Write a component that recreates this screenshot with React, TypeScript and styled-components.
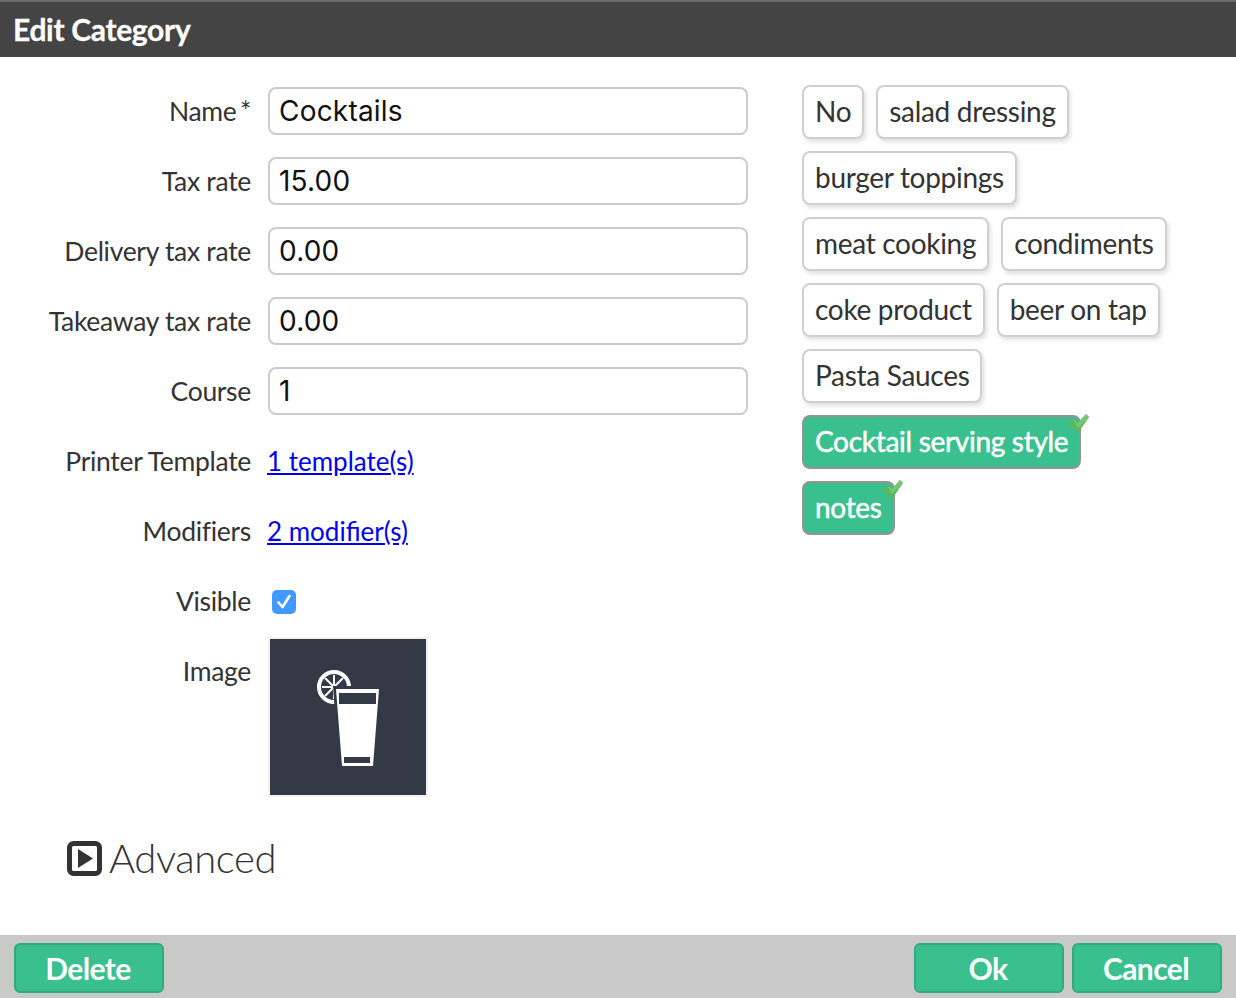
import React from 'react'
import styled, { createGlobalStyle } from 'styled-components'

const GlobalStyle = createGlobalStyle`
  html, body { margin: 0; padding: 0; background: #fff; }
  body { font-family: Lato, "Liberation Sans", sans-serif; color: #333; }
`

const Page = styled.div`
  width: 1236px;
  height: 998px;
  display: flex;
  flex-direction: column;
  overflow: hidden;
`

const Header = styled.header`
  flex: none;
  height: 57px;
  box-sizing: border-box;
  background: #444;
  border-top: 2px solid #6b6b6b;
  display: flex;
  align-items: center;
  padding-left: 13px;
  padding-bottom: 2px;
  color: #fff;
  font-size: 30px;
  font-weight: 700;
  letter-spacing: -0.32px;
  -webkit-text-stroke: 0.3px #fff;
`

const Body = styled.main`
  flex: 1;
  min-height: 0;
  display: flex;
`

const Form = styled.div`
  width: 802px;
  flex: none;
  display: flex;
  flex-direction: column;
  padding-top: 19px;
`

const Row = styled.div<{ $tall?: boolean }>`
  display: grid;
  grid-template-columns: 251px 480px;
  column-gap: 17px;
  height: ${p => (p.$tall ? '161px' : '70px')};
  align-items: ${p => (p.$tall ? 'start' : 'center')};
`

const Label = styled.label<{ $tall?: boolean; $tight?: boolean }>`
  text-align: right;
  font-size: 26.5px;
  letter-spacing: -0.3px;
  word-spacing: ${p => (p.$tight ? '-3px' : '0')};
  color: #333;
  line-height: 32px;
  margin-top: ${p => (p.$tall ? '19px' : '0')};
`

const Input = styled.input`
  width: 480px;
  height: 48px;
  box-sizing: border-box;
  border: 2px solid #ccc;
  border-radius: 8px;
  padding: 0 9px;
  font-family: Inter, sans-serif;
  font-size: 28px;
  letter-spacing: 0.2px;
  color: #111;
  background: #fff;
  outline: none;
`

const ValueLink = styled.a`
  color: #0000ee;
  font-size: 26px;
  margin-left: -1px;
  text-decoration: underline;
`

const CheckCell = styled.div`
  padding: 2px 0 0 4px;
  display: flex;
  align-items: center;
`

const ImageBox = styled.div`
  width: 160px;
  height: 160px;
  box-sizing: border-box;
  border: 2px solid #f2f2f2;
  background: #333a46;
  margin-top: 1px;
`

const Tags = styled.div`
  flex: 1;
  display: flex;
  flex-direction: column;
  gap: 12px;
  padding-top: 28px;
`

const TagRow = styled.div`
  display: flex;
  gap: 12px;
`

const Tag = styled.div<{ $on?: boolean }>`
  position: relative;
  height: 54px;
  box-sizing: border-box;
  padding: 0 11px 2px;
  display: flex;
  align-items: center;
  border-radius: 8px;
  border: 2px solid ${p => (p.$on ? '#949494' : '#d0d0d0')};
  background: ${p => (p.$on ? '#39c08e' : '#fff')};
  color: ${p => (p.$on ? '#fff' : '#333')};
  font-size: 28px;
  letter-spacing: -0.3px;
  -webkit-text-stroke: ${p => (p.$on ? '0.5px #fff' : '0')};
  box-shadow: ${p => (p.$on ? 'none' : '2px 3px 4px rgba(0, 0, 0, 0.12)')};
`

const Tick = styled.svg`
  position: absolute;
  top: -3px;
  right: -10px;
`

const Advanced = styled.div`
  display: flex;
  align-items: center;
  gap: 7px;
  margin: 37px 0 0 67px;
  font-size: 40px;
  font-weight: 300;
  letter-spacing: -0.4px;
  color: #333;
  line-height: 48px;
`

const Footer = styled.footer`
  flex: none;
  height: 63px;
  box-sizing: border-box;
  background: #c9c9c9;
  display: flex;
  align-items: flex-start;
  padding: 8px 14px 0;
  gap: 8px;
`

const Spacer = styled.div`
  flex: 1;
`

const Button = styled.button`
  width: 150px;
  height: 50px;
  box-sizing: border-box;
  border: 2px solid #31ab7e;
  border-radius: 6px;
  background: #39c08e;
  color: #fff;
  font-family: Lato, sans-serif;
  font-size: 30px;
  font-weight: 700;
  letter-spacing: -0.6px;
  padding: 0 2px 0 0;
`

const CheckBox = () => (
  <svg width="24" height="24" viewBox="0 0 24 24">
    <rect width="24" height="24" rx="5" fill="#4099ff" />
    <path d="M6.500 12.500l4 4.500 7-11" fill="none" stroke="#fff" strokeWidth="2.600" strokeLinecap="round" strokeLinejoin="round" />
  </svg>
)

const GreenTick = () => (
  <Tick width="21" height="20" viewBox="0 0 21 20">
    <path d="M0 9l5-4 5 4 8-9 3 3-11 16z" fill="#5cb85c" />
    <path d="M5 5l5 4 8-9 3 3-11 11z" fill="#74c874" />
  </Tick>
)

const CocktailIcon = () => (
  <svg width="156" height="156" viewBox="0 0 156 156">
    <circle cx="64" cy="48" r="15" fill="none" stroke="#fff" strokeWidth="4" />
    <g stroke="#fff" strokeWidth="2">
      <path d="M64 36v24M52 48h24M55 39l18 18M73 39L55 57" />
    </g>
    <path d="M63 47h49l-6 83H69z" fill="#333a46" />
    <path d="M66 50h43l-6 77H72z" fill="#fff" />
    <rect x="69" y="54" width="37" height="11" fill="#333a46" />
    <rect x="74" y="118" width="26" height="6" fill="#333a46" />
  </svg>
)

const PlayBox = () => (
  <svg width="35" height="35" viewBox="0 0 35 35">
    <rect x="2.500" y="2.500" width="30" height="30" rx="4" fill="none" stroke="#333" strokeWidth="5" />
    <path d="M11 8l15 9.500L11 27z" fill="#333" />
  </svg>
)

export default function App() {
  return (
    <Page>
      <GlobalStyle />
      <Header>Edit Category</Header>
      <Body>
        <Form>
          <Row><Label $tight>Name *</Label><Input defaultValue="Cocktails" /></Row>
          <Row><Label>Tax rate</Label><Input defaultValue="15.00" /></Row>
          <Row><Label>Delivery tax rate</Label><Input defaultValue="0.00" /></Row>
          <Row><Label>Takeaway tax rate</Label><Input defaultValue="0.00" /></Row>
          <Row><Label>Course</Label><Input defaultValue="1" /></Row>
          <Row><Label>Printer Template</Label><div><ValueLink href="#">1 template(s)</ValueLink></div></Row>
          <Row><Label>Modifiers</Label><div><ValueLink href="#">2 modifier(s)</ValueLink></div></Row>
          <Row><Label>Visible</Label><CheckCell><CheckBox /></CheckCell></Row>
          <Row $tall>
            <Label $tall>Image</Label>
            <ImageBox><CocktailIcon /></ImageBox>
          </Row>
          <Advanced><PlayBox />Advanced</Advanced>
        </Form>
        <Tags>
          <TagRow><Tag>No</Tag><Tag>salad dressing</Tag></TagRow>
          <TagRow><Tag>burger toppings</Tag></TagRow>
          <TagRow><Tag>meat cooking</Tag><Tag>condiments</Tag></TagRow>
          <TagRow><Tag>coke product</Tag><Tag>beer on tap</Tag></TagRow>
          <TagRow><Tag>Pasta Sauces</Tag></TagRow>
          <TagRow><Tag $on>Cocktail serving style<GreenTick /></Tag></TagRow>
          <TagRow><Tag $on>notes<GreenTick /></Tag></TagRow>
        </Tags>
      </Body>
      <Footer>
        <Button>Delete</Button>
        <Spacer />
        <Button>Ok</Button>
        <Button>Cancel</Button>
      </Footer>
    </Page>
  )
}
